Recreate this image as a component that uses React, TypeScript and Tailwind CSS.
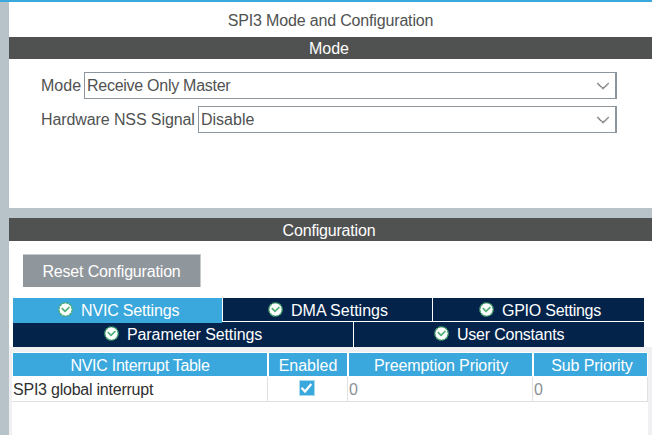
import React from "react";

function StatusIcon() {
  return (
    <svg width="16" height="16" viewBox="0 0 16 16" className="shrink-0">
      <circle cx="7.5" cy="7.5" r="6.6" fill="#fff" stroke="#4fae74" strokeWidth="1.4" strokeDasharray="2.8 .65" />
      <path d="M3.8 6.2 7 9.4 11.4 5" fill="none" stroke="#4fae74" strokeWidth="1.7" />
    </svg>
  );
}

function Select({ label, value, labelClass, valueClass }: { label: string; value: string; labelClass: string; valueClass: string }) {
  return (
    <div className="flex h-[27px] w-[576px] items-stretch">
      <span className={`shrink-0 whitespace-nowrap leading-[28px] ${labelClass}`}>{label}</span>
      <div className="flex flex-1 items-center justify-between border border-r-2 border-[#8e969d] pr-[6px]">
        <span className={`leading-[26px] ${valueClass}`}>{value}</span>
        <svg width="12" height="8" viewBox="0 0 12 8">
          <path d="M.4 1C2 3.4 4 4.2 6 6.6 8 4.2 10 3.4 11.6 1" fill="none" stroke="#808080" strokeWidth="1.6" strokeDasharray="1.8 .3" />
        </svg>
      </div>
    </div>
  );
}

function Tab({ label, className }: { label: string; className: string }) {
  return (
    <div className={`flex items-start text-white ${className}`}>
      <StatusIcon />
      <span className="ml-[7px] whitespace-nowrap leading-[18px]">{label}</span>
    </div>
  );
}

export default function App() {
  return (
    <div className="flex h-[435px] w-[652px] flex-col overflow-hidden bg-white text-[16px] text-[#505251] [font-family:'Liberation_Sans',Arial,sans-serif]">
      <div className="h-[2px] shrink-0 bg-[#3aa8dc]" />
      <div className="flex flex-1">
        <div className="w-[9px] shrink-0 bg-[#b8c3c9]" />
        <main className="flex w-[643px] flex-col">
          <h1 className="h-[35px] pt-[9px] text-center leading-[19px] tracking-[-0.16px]">SPI3 Mode and Configuration</h1>
          <h2 className="h-[22px] shrink-0 bg-[#505251] pr-[3px] text-center leading-[24px] text-white">Mode</h2>
          <section className="flex h-[149px] shrink-0 flex-col gap-[7px] pt-[13px] pl-[32px]">
            <Select label="Mode" value="Receive Only Master" labelClass="w-[43px]" valueClass="pl-[2px] tracking-[-0.27px]" />
            <Select label="Hardware NSS Signal" value="Disable" labelClass="w-[157px] tracking-[-0.1px]" valueClass="pl-[2px]" />
          </section>
          <div className="h-[10px] shrink-0 bg-[#b8c3c9]" />
          <h2 className="h-[23px] shrink-0 bg-[#505251] pr-[3px] text-center leading-[25px] tracking-[-0.18px] text-white">Configuration</h2>
          <div className="h-[57px] shrink-0 pt-[13px] pl-[14px]">
            <button className="block h-[33px] w-[178px] border-t border-r border-[#c5cacd] bg-[#8f969c] leading-[33px] tracking-[-0.17px] text-white">Reset Configuration</button>
          </div>
          <nav className="flex h-[49px] shrink-0 flex-col pl-[4px]">
            <div className="flex h-[24px] gap-px">
              <Tab label="NVIC Settings" className="relative h-[25px] w-[209px] bg-[#3aa8dc] pt-[4px] pl-[45px] tracking-[-0.17px]" />
              <Tab label="DMA Settings" className="h-[23px] w-[209px] bg-[#03234b] pt-[4px] pl-[45px] tracking-[0px]" />
              <Tab label="GPIO Settings" className="h-[23px] w-[211px] bg-[#03234b] pt-[4px] pl-[46px] tracking-[-0.25px]" />
            </div>
            <div className="flex h-[25px] gap-px">
              <Tab label="Parameter Settings" className="w-[340px] bg-[#03234b] pt-[4px] pl-[91px] tracking-[-0.1px]" />
              <Tab label="User Constants" className="w-[290px] bg-[#03234b] pt-[4px] pl-[80px] tracking-[-0.22px]" />
            </div>
          </nav>
          <section className="flex flex-1 flex-col bg-[#f0f0f2] pt-[5px] pr-[4px] pl-[3px]">
            <div className="flex flex-1 flex-col bg-white pt-px">
              <div className="flex h-[23px] gap-[2px] pr-px pl-px text-center leading-[25px] text-white">
                <div className="w-[254px] bg-[#3aa8dc] tracking-[-0.28px]">NVIC Interrupt Table</div>
                <div className="w-[78px] bg-[#3aa8dc]">Enabled</div>
                <div className="w-[183px] bg-[#3aa8dc] pl-px tracking-[-0.1px]">Preemption Priority</div>
                <div className="flex-1 bg-[#3aa8dc] pl-[3px] tracking-[-0.1px]">Sub Priority</div>
              </div>
              <div className="mt-px flex h-[25px] border-b border-[#dfe1e3] leading-[25px] text-[#8b9096]">
                <div className="w-[256px] border-r border-[#dfe1e3] pl-px tracking-[-0.23px] text-[#303030]">SPI3 global interrupt</div>
                <div className="flex w-[80px] border-r border-[#dfe1e3] pt-[3px] pl-[31px]">
                  <svg width="16" height="16" viewBox="0 0 16 16">
                    <path d="M0 0h16v16H0z" fill="#a8daef" />
                    <path d="M1 1h14v14H1z" fill="#3aa8dc" />
                    <path d="M2.5 7.8 6 11.5 12.3 4" fill="none" stroke="#fff" strokeWidth="2.2" />
                  </svg>
                </div>
                <div className="w-[185px] border-r border-[#dfe1e3] pl-px">0</div>
                <div className="flex-1 border-r border-[#dfe1e3] pl-px">0</div>
              </div>
            </div>
          </section>
        </main>
      </div>
    </div>
  );
}
